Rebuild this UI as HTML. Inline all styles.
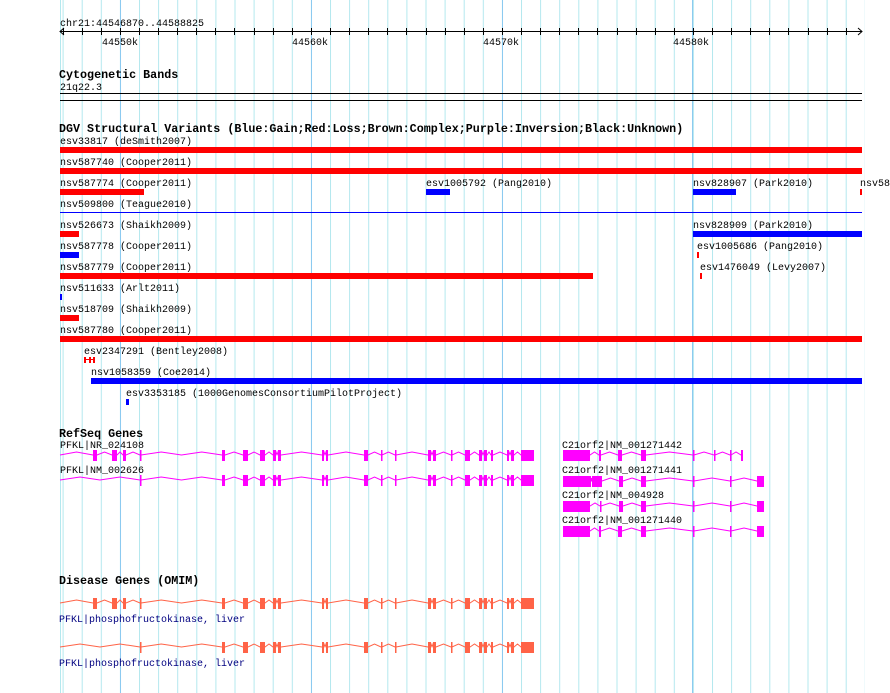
<!DOCTYPE html>
<html><head><meta charset="utf-8">
<style>
html,body{margin:0;padding:0;background:#fff;width:890px;height:693px;overflow:hidden}
svg{display:block}
text{font-family:"Liberation Mono",monospace;font-size:10px;fill:#000}
.b{font-weight:bold;font-size:11.7px}
.n{fill:#000080}
</style></head><body>
<svg id="s" width="890" height="693" xmlns="http://www.w3.org/2000/svg">
<defs>
<pattern id="g" x="62.6" y="0" width="19.1" height="693" patternUnits="userSpaceOnUse">
<rect x="0" y="0" width="1" height="693" fill="#b4e8ee"/>
</pattern>
</defs>
<rect x="60" y="0" width="805" height="693" fill="url(#g)"/>
<rect x="60" y="0" width="1" height="693" fill="#b4e8ee"/>
<rect x="120" y="0" width="1" height="693" fill="#8ccaf0"/>
<rect x="311" y="0" width="1" height="693" fill="#8ccaf0"/>
<rect x="502" y="0" width="1" height="693" fill="#8ccaf0"/>
<rect x="692" y="0" width="1" height="693" fill="#8ccaf0"/>

<!-- ruler -->
<text x="60" y="26">chr21:44546870..44588825</text>
<g id="ruler"></g>
<rect x="60" y="31" width="802" height="1" fill="#000"/>
<polyline points="64,28 60,31.5 64,35" fill="none" stroke="#000"/>
<polyline points="858,28 862,31.5 858,35" fill="none" stroke="#000"/>
<text x="102" y="45">44550k</text>
<text x="292" y="45">44560k</text>
<text x="483" y="45">44570k</text>
<text x="673" y="45">44580k</text>

<text x="59" y="78" class="b">Cytogenetic Bands</text>
<text x="60" y="90">21q22.3</text>
<rect x="60" y="93" width="802" height="1" fill="#000"/>
<rect x="60" y="100" width="802" height="1" fill="#000"/>

<text x="59" y="132" class="b">DGV Structural Variants (Blue:Gain;Red:Loss;Brown:Complex;Purple:Inversion;Black:Unknown)</text>

<text x="60" y="144">esv33817 (deSmith2007)</text>
<rect x="60" y="147" width="802" height="6" fill="#f00"/>
<text x="60" y="165">nsv587740 (Cooper2011)</text>
<rect x="60" y="168" width="802" height="6" fill="#f00"/>
<text x="60" y="186">nsv587774 (Cooper2011)</text>
<rect x="60" y="189" width="84" height="6" fill="#f00"/>
<text x="426" y="186">esv1005792 (Pang2010)</text>
<rect x="426" y="189" width="24" height="6" fill="#00f"/>
<text x="693" y="186">nsv828907 (Park2010)</text>
<rect x="693" y="189" width="43" height="6" fill="#00f"/>
<text x="860" y="186">nsv58</text>
<rect x="860" y="189" width="2" height="6" fill="#f00"/>
<text x="60" y="207">nsv509800 (Teague2010)</text>
<rect x="60" y="212" width="802" height="1" fill="#00f"/>
<text x="60" y="228">nsv526673 (Shaikh2009)</text>
<rect x="60" y="231" width="19" height="6" fill="#f00"/>
<text x="693" y="228">nsv828909 (Park2010)</text>
<rect x="693" y="231" width="169" height="6" fill="#00f"/>
<text x="60" y="249">nsv587778 (Cooper2011)</text>
<rect x="60" y="252" width="19" height="6" fill="#00f"/>
<text x="697" y="249">esv1005686 (Pang2010)</text>
<rect x="697" y="252" width="2" height="6" fill="#f00"/>
<text x="60" y="270">nsv587779 (Cooper2011)</text>
<rect x="60" y="273" width="533" height="6" fill="#f00"/>
<text x="700" y="270">esv1476049 (Levy2007)</text>
<rect x="700" y="273" width="2" height="6" fill="#f00"/>
<text x="60" y="291">nsv511633 (Arlt2011)</text>
<rect x="60" y="294" width="2" height="6" fill="#00f"/>
<text x="60" y="312">nsv518709 (Shaikh2009)</text>
<rect x="60" y="315" width="19" height="6" fill="#f00"/>
<text x="60" y="333">nsv587780 (Cooper2011)</text>
<rect x="60" y="336" width="802" height="6" fill="#f00"/>
<text x="84" y="354">esv2347291 (Bentley2008)</text>
<rect x="84" y="357" width="2" height="6" fill="#f00"/>
<rect x="89" y="357" width="2" height="6" fill="#f00"/>
<rect x="93" y="357" width="2" height="6" fill="#f00"/>
<rect x="84" y="359" width="11" height="1" fill="#f00"/>
<text x="91" y="375">nsv1058359 (Coe2014)</text>
<rect x="91" y="378" width="771" height="6" fill="#00f"/>
<text x="126" y="396">esv3353185 (1000GenomesConsortiumPilotProject)</text>
<rect x="126" y="399" width="3" height="6" fill="#00f"/>

<text x="59" y="437" class="b">RefSeq Genes</text>
<text x="60" y="448">PFKL|NR_024108</text>
<text x="60" y="473">PFKL|NM_002626</text>
<text x="562" y="448">C21orf2|NM_001271442</text>
<text x="562" y="473">C21orf2|NM_001271441</text>
<text x="562" y="498">C21orf2|NM_004928</text>
<text x="562" y="523">C21orf2|NM_001271440</text>

<text x="59" y="584" class="b">Disease Genes (OMIM)</text>
<text x="59" y="622" class="n">PFKL|phosphofructokinase, liver</text>
<text x="59" y="666" class="n">PFKL|phosphofructokinase, liver</text>
<g id="genes"></g>
</svg>
<script>
var NS="http://www.w3.org/2000/svg";
var r=document.getElementById("ruler");
for(var x=62.6;x<862;x+=19.1){var l=document.createElementNS(NS,"rect");l.setAttribute("x",Math.round(x));l.setAttribute("y",28);l.setAttribute("width",1);l.setAttribute("height",7);l.setAttribute("fill","#000");r.appendChild(l);}
var G=document.getElementById("genes");
function gene(y,start,ex,col){
  var pts=[[start,y]];var cur=start;
  for(var i=0;i<ex.length;i++){
    var a=cur,b=ex[i][0];
    if(b>a){
      var n=Math.max(1,Math.round((b-a)/40));var w=(b-a)/n;
      for(var k=0;k<n;k++){pts.push([a+w*k+w/2,y-3]);pts.push([a+w*(k+1),y]);}
    }
    cur=Math.max(cur,ex[i][1]);
    var rc=document.createElementNS(NS,"rect");
    rc.setAttribute("x",ex[i][0]);rc.setAttribute("y",y-5);
    rc.setAttribute("width",Math.max(1.5,ex[i][1]-ex[i][0]));rc.setAttribute("height",11);
    rc.setAttribute("fill",col);G.appendChild(rc);
    pts.push([cur,y]);
  }
  var p=document.createElementNS(NS,"polyline");
  p.setAttribute("points",pts.map(function(q){return q[0]+","+q[1]}).join(" "));
  p.setAttribute("fill","none");p.setAttribute("stroke",col);p.setAttribute("stroke-width","1");
  G.insertBefore(p,G.firstChild);
}
var tail=[[222,225],[243,248],[260,265],[273,276],[278,281],[322,324],[326,328],[364,368],[381,382],[395,396],[428,431],[433,436],[451,452],[465,470],[479,482],[484,487],[491,493],[507,509],[511,514],[521,534]];
var full=[[93,97],[112,117],[123,126],[140,141]].concat(tail);
var part=[[140,141]].concat(tail);
gene(455,60,full,"#f0f");
gene(480,60,part,"#f0f");
gene(603,60,full,"#ff6347");
gene(647,60,part,"#ff6347");
gene(455,563,[[563,590],[599,601],[618,622],[641,646],[693,694],[714,715],[730,731],[741,743]],"#f0f");
gene(481,563,[[563,591],[592,602],[619,623],[641,646],[693,694],[730,731],[757,764]],"#f0f");
gene(506,563,[[563,590],[600,601],[619,623],[641,646],[693,694],[730,731],[757,764]],"#f0f");
gene(531,563,[[563,590],[599,601],[618,622],[641,646],[693,694],[730,731],[757,764]],"#f0f");
</script>
</body></html>
